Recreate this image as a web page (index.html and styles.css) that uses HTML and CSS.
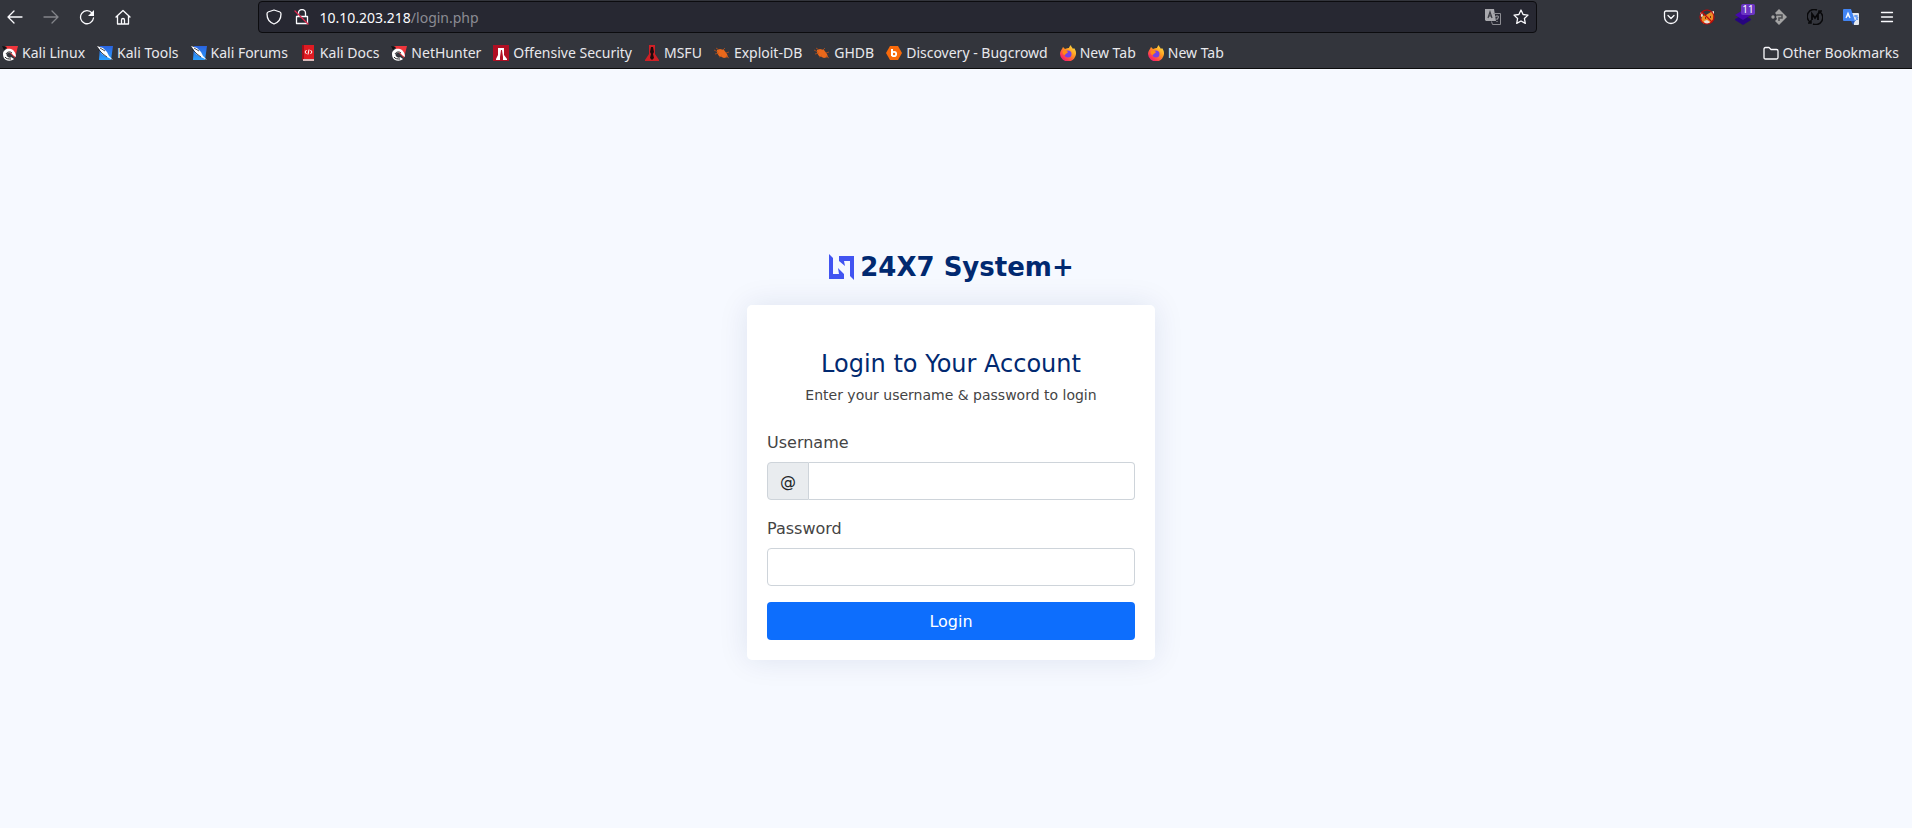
FILE: index.html
```html
<!DOCTYPE html>
<html lang="en">
<head>
<meta charset="utf-8">
<title>24X7 System+</title>
<link rel="stylesheet" href="styles.css">
</head>
<body>
<svg class="defs" width="0" height="0" aria-hidden="true">
  <defs>
    <linearGradient id="blue" x1="0" y1="0" x2="0" y2="1"><stop offset="0" stop-color="#2a62e0"/><stop offset="1" stop-color="#2aa0ff"/></linearGradient>
    <linearGradient id="fire" x1="1" y1="0" x2="0.2" y2="1"><stop offset="0" stop-color="#fff44f"/><stop offset="0.45" stop-color="#ff9a1f"/><stop offset="0.8" stop-color="#ff3b50"/><stop offset="1" stop-color="#e31587"/></linearGradient>
    <symbol id="kali" viewBox="0 0 16 16"><path d="M3 1h13l-3 12L8 8z" fill="#f0363c"/><path d="M0 1l5 1-3 3z" fill="#111"/><path d="M1 9c0-4 4-6 8-5 3 1 5 4 5 8l-3-2c-1-2-3-3-5-2-2 0-2 3 0 4 1 1 3 1 3 0l3 2c-2 2-6 2-8 1-2-1-3-3-3-6z" fill="#fff"/><path d="M4 9c1-2 4-3 6-1M3 12c1 2 4 2 6 2" fill="none" stroke="#222" stroke-width="1"/></symbol>
    <symbol id="tool" viewBox="0 0 16 16"><path d="M3 1h13l-2 14H2z" fill="url(#blue)"/><path d="M0 1l6 2 4 4 2 4 4 4-6-3-5-3-2-4z" fill="#fff"/><path d="M1 4l5 5 4 3M3 3l5 3" fill="none" stroke="#222" stroke-width="0.800"/></symbol>
    <symbol id="bug" viewBox="0 0 16 16"><path d="M3 5l3-1 4 1 3 4 1 3-4 1-5-2-2-3z" fill="#e9681b"/><path d="M0 5l4 2M1 9l4-1M9 5l2-2M12 8l3-1M5 12l3-1M12 11l3 2M2 3l3 2" stroke="#b9521b" stroke-width="0.800" fill="none"/></symbol>
    <symbol id="fox" viewBox="0 0 16 16"><path d="M2 4l1-2 2 2c2-1 3-1 4-1 0-1 1-2 2-3 0 2 1 2 2 4l1-1c1 1 2 3 2 5a8 8 0 0 1-16 1c0-2 1-4 2-5z" fill="url(#fire)"/><circle cx="8" cy="9" r="3.500" fill="#7542e5"/><path d="M3 6c2-1 4 0 5 1 0 1-2 1-3 3-2 0-3-2-2-4z" fill="#ff8a16"/></symbol>
  </defs>
</svg>

<header class="browser">
  <nav class="toolbar" aria-label="Navigation">
    <div class="nav-buttons">
      <button class="icon-btn" aria-label="Back"><svg width="16" height="16" viewBox="0 0 16 16" class="line"><path d="M15 8H1.500M7 2L1 8l6 6"/></svg></button>
      <button class="icon-btn dim" aria-label="Forward"><svg width="16" height="16" viewBox="0 0 16 16" class="line"><path d="M1 8h13.500M9 2l6 6-6 6"/></svg></button>
      <button class="icon-btn" aria-label="Reload"><svg width="16" height="16" viewBox="0 0 16 16" class="line"><path d="M13 4A6.500 6.500 0 1 0 14.500 9"/><path d="M15 1v6H9z" fill="#fbfbfe" stroke="none"/></svg></button>
      <button class="icon-btn" aria-label="Home"><svg width="16" height="16" viewBox="0 0 16 16" class="line"><path d="M1 8l7-6.500L15 8M2.500 7v8h11V7M6.500 15v-4a1.500 1.500 0 0 1 3 0v4"/></svg></button>
    </div>
    <div class="address">
      <svg width="16" height="16" viewBox="0 0 16 16" class="line"><path d="M8 1L2 3C1 3.300 1 4 1 5c0 5 3 8.500 7 10 4-1.500 7-5 7-10 0-1 0-1.700-1-2z"/></svg>
      <svg width="16" height="16" viewBox="0 0 16 16" class="line"><path d="M4.500 7V4a3.500 3.500 0 0 1 7 0v3M2.500 7.500h11v7h-11z"/><path d="M1 2l13 13" stroke="#e22850"/></svg>
      <span class="url">10.10.203.218<span class="path">/login.php</span></span>
      <svg class="end" width="16" height="16" viewBox="0 0 16 16"><path d="M0 0h9l2 12H1L0 11z" fill="#a9a9ae"/><path d="M8 4.500h7.500v11H7.500l-1-3" fill="none" stroke="#8d8d93"/><path d="M3 9l2-6 2 6M3.500 7h3" fill="none" stroke="#3a3b42" stroke-width="1.200"/><path d="M10.500 8c1-2 4-1 2.500 1l-1 1v1m0 1v1" fill="none" stroke="#8d8d93" stroke-width="1.300"/></svg>
      <svg width="16" height="16" viewBox="0 0 16 16" class="line"><path d="M8 1l2.100 4.500 4.900.6-3.600 3.400.9 4.900L8 12l-4.300 2.400.9-4.900L1 6.100l4.900-.6z"/></svg>
    </div>
    <div class="extensions">
      <button class="icon-btn" aria-label="Pocket"><svg width="16" height="16" viewBox="0 0 16 16" class="line"><path d="M3 2h10q1.500 0 1.500 1.500V8a6.500 6.500 0 0 1-13 0V3.500Q1.500 2 3 2zM5 6.500l3 3 3-3"/></svg></button>
      <button class="icon-btn" aria-label="Proxy"><svg width="16" height="16" viewBox="0 0 16 16"><path d="M3 7l4-1 5-3 3 2-1 6-3 3-6 1-3-3z" fill="#ef8b25"/><path d="M1 4l2-1 1 4-2 1zM12 3l3-1v4z" fill="#f4e6d8"/><path d="M5 12l3-1 3 2-2 2H6z" fill="#e8e0d8"/><path d="M6 9h1M11 8h1" stroke="#40210f" stroke-width="1.500"/><circle cx="8" cy="8" r="7" fill="none" stroke="#c00a0a" stroke-width="1.200"/><path d="M3 3l10 10" stroke="#c00a0a" stroke-width="1.200"/></svg></button>
      <button class="icon-btn" aria-label="Layers"><svg width="16" height="16" viewBox="0 0 16 16"><path d="M0 10l8-4 8 4v1l-8 5-8-5z" fill="#26057e"/><path d="M0 6l8-5 8 5-8 5z" fill="#4608ad"/></svg><span class="badge">11</span></button>
      <button class="icon-btn" aria-label="Request tool"><svg width="16" height="16" viewBox="0 0 16 16"><path d="M8 0l8 8-8 8-4-4 2-2-1-2 1-2-2-2z" fill="#a3a3a3"/><path d="M6 6h5v3H8v3" stroke="#4b4c50" stroke-width="1.500" fill="none"/><circle cx="2" cy="8" r="1.700" fill="#a3a3a3"/></svg></button>
      <button class="icon-btn" aria-label="Session tool"><svg width="16" height="16" viewBox="0 0 16 16" fill="none" stroke="#08080a" stroke-width="1.500"><path d="M3 13A7 7 0 0 1 10 1M13 3a7 7 0 0 1-7 12M1 14h3v-3M15 2h-3v3"/><path d="M5 11V5l3 4 3-4v6" stroke-width="1.800"/></svg></button>
      <button class="icon-btn" aria-label="Translate"><svg width="16" height="16" viewBox="0 0 16 16"><path d="M7 4h8q1 0 1 1v10q0 1-1 1h-4z" fill="#e4e8ee"/><path d="M1 0h7l4 12H1q-1 0-1-1V1q0-1 1-1z" fill="#4285f4"/><path d="M8 12h4l-2 4z" fill="#2456b8"/><path d="M3 9l2-5 2 5M4 7h2" fill="none" stroke="#fff" stroke-width="1.200"/><path d="M11 7h4M13 6v1c0 2 1 3 2 4M15 8c-1 2-2 3-3 4" fill="none" stroke="#4285f4"/></svg></button>
      <button class="icon-btn" aria-label="Menu"><svg width="16" height="16" viewBox="0 0 16 16" class="line"><path d="M2.500 3.500h11M2.500 8h11M2.500 12.500h11"/></svg></button>
    </div>
  </nav>
  <nav class="bookmarks" aria-label="Bookmarks">
    <a href="#"><svg width="16" height="16"><use href="#kali"/></svg>Kali Linux</a>
    <a href="#"><svg width="16" height="16"><use href="#tool"/></svg>Kali Tools</a>
    <a href="#"><svg width="16" height="16"><use href="#tool"/></svg>Kali Forums</a>
    <a href="#"><svg width="16" height="16" viewBox="0 0 16 16"><path d="M2 0h12v14H2z" fill="#e01b22"/><path d="M2 0h2v15H2z" fill="#a30d18"/><path d="M3 14h11v2H3z" fill="#d8b8b8"/><path d="M6.500 5L5 7l1.500 2M10.500 5L12 7l-1.500 2M9 4.500l-1 5" fill="none" stroke="#fff"/></svg>Kali Docs</a>
    <a href="#"><svg width="16" height="16"><use href="#kali"/></svg>NetHunter</a>
    <a href="#"><svg width="16" height="16" viewBox="0 0 16 16"><path d="M0 0h16v16H0z" fill="#b00f23"/><path d="M5 3h6v7l3 4v1h-4v-3l-1-7H8l-1 7v3H3v-1l2-4z" fill="#fff"/></svg>Offensive Security</a>
    <a href="#"><svg width="16" height="16" viewBox="0 0 16 16"><path d="M5 0h6v9l4 6v1H1v-1l4-6z" fill="#cf2026"/><path d="M7 2h2l1 5-1 2 1 4-2 2-2-2 1-4-1-2z" fill="#1c0b0d"/></svg>MSFU</a>
    <a href="#"><svg width="16" height="16"><use href="#bug"/></svg>Exploit-DB</a>
    <a href="#"><svg width="16" height="16"><use href="#bug"/></svg>GHDB</a>
    <a href="#"><svg width="16" height="16" viewBox="0 0 16 16"><path d="M4 1h8l4 7-4 7H4L0 8z" fill="#f96a0b"/><path d="M6 4v7" stroke="#fff" stroke-width="2"/><circle cx="8" cy="9" r="2.200" fill="none" stroke="#fff" stroke-width="1.800"/></svg>Discovery - Bugcrowd</a>
    <a href="#"><svg width="16" height="16"><use href="#fox"/></svg>New Tab</a>
    <a href="#"><svg width="16" height="16"><use href="#fox"/></svg>New Tab</a>
    <a href="#" class="other"><svg width="16" height="16" viewBox="0 0 16 16" class="line"><path d="M1 4q0-1.500 1.500-1.500H6l2 2h5.500Q15 4.500 15 6v6.500q0 1.500-1.500 1.500h-11Q1 14 1 12.500z"/></svg>Other Bookmarks</a>
  </nav>
</header>

<main class="page">
  <a class="logo" href="#">
    <svg width="26" height="26" viewBox="0 0 26 26"><path d="M1 0l4 4v16h6l-1-6 6 6v5H1zM26 26l-4-4V7h-6l1 5-6-5V2h15z" fill="#4154f1"/></svg>
    <span>24X7 System+</span>
  </a>
  <form class="card">
    <h1>Login to Your Account</h1>
    <p>Enter your username &amp; password to login</p>
    <div class="field">
      <label for="username">Username</label>
      <div class="group"><span class="prefix">@</span><input id="username" type="text"></div>
    </div>
    <div class="field">
      <label for="password">Password</label>
      <input id="password" type="password">
    </div>
    <button class="submit" type="button">Login</button>
  </form>
</main>
</body>
</html>
```
FILE: styles.css
```css
* { box-sizing: border-box; }

body {
  margin: 0;
  min-height: 100vh;
  display: flex;
  flex-direction: column;
  background: #f6f9ff;
  color: #444;
  font: 16px/24px "DejaVu Sans", sans-serif;
}

a { color: inherit; text-decoration: none; }
button, input { font: inherit; }
svg { flex: none; display: block; }
.defs { position: absolute; }

.line { fill: none; stroke: #fbfbfe; stroke-width: 1.3; stroke-linecap: round; stroke-linejoin: round; }

.browser {
  background: #33353c;
  border-bottom: 1px solid #0c0c0d;
  color: #e8e8ec;
  font: 14px/20px "Noto Sans", sans-serif;
}

.toolbar {
  display: flex;
  align-items: center;
  justify-content: space-between;
  height: 36px;
  padding: 0 17px 2px 7px;
}

.nav-buttons, .extensions { display: flex; gap: 20px; }

.icon-btn {
  position: relative;
  display: block;
  padding: 0;
  border: 0;
  background: none;
}

.dim { opacity: 0.4; }

.badge {
  position: absolute;
  left: 6px;
  top: -5px;
  width: 14px;
  border-radius: 2px;
  background: #6a35c2;
  color: #fff;
  font-size: 10px;
  line-height: 11px;
}

.address {
  display: flex;
  align-items: center;
  gap: 12px;
  flex: 0 1 1279px;
  height: 32px;
  padding: 0 7px;
  border: 1px solid #0c0c0f;
  border-radius: 4px;
  background: #272832;
}

.url { margin-left: -2px; padding-top: 1px; color: #fbfbfe; }
.path { color: #8c8c94; }
.end { margin-left: auto; }

.bookmarks {
  display: flex;
  align-items: center;
  gap: 12px;
  height: 32px;
  padding: 2px 13px 0 2px;
  white-space: nowrap;
}

.bookmarks a { display: flex; align-items: center; gap: 4px; }
.bookmarks .other { margin-left: auto; }

.page {
  flex: 1;
  display: flex;
  flex-direction: column;
  align-items: center;
  justify-content: center;
  padding: 14px 10px 0 0;
}

.logo {
  display: flex;
  align-items: center;
  gap: 6px;
  margin-bottom: 22px;
  color: #012970;
  font-size: 26px;
  line-height: 31px;
  font-weight: 700;
}

.card {
  width: 100%;
  max-width: 408px;
  padding: 45px 20px 20px;
  border-radius: 5px;
  background: #fff;
  box-shadow: 0 0 30px rgba(1, 41, 112, 0.1);
}

.card h1 {
  margin: 0 0 6px;
  color: #012970;
  font-size: 24px;
  line-height: 29px;
  font-weight: 400;
  text-align: center;
}

.card p {
  margin: 0 0 24px;
  font-size: 14px;
  line-height: 21px;
  text-align: center;
}

.field { margin-bottom: 16px; }
.field label { display: block; padding-top: 1px; margin-bottom: 7px; }

.field input {
  display: block;
  width: 100%;
  height: 38px;
  padding: 6px 12px;
  border: 1px solid #ced4da;
  border-radius: 4px;
  background: #fff;
  color: #212529;
}

.group { display: flex; }
.group input { flex: 1; min-width: 0; border-left: 0; border-radius: 0 4px 4px 0; }

.prefix {
  padding: 7px 12px 5px;
  border: 1px solid #ced4da;
  border-radius: 4px 0 0 4px;
  background: #e9ecef;
  color: #212529;
}

.submit {
  width: 100%;
  height: 38px;
  padding: 2px 12px 0;
  border: 0;
  border-radius: 4px;
  background: #0d6efd;
  color: #fff;
}
```
